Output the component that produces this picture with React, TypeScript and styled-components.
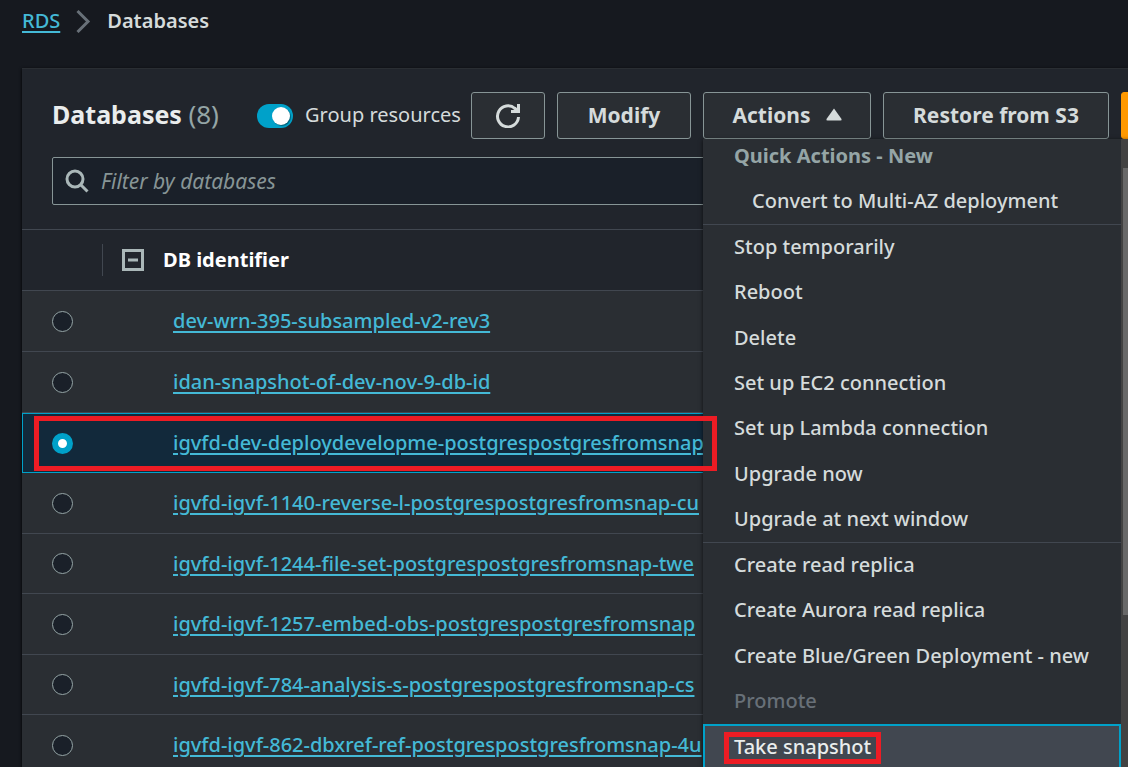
import React, { useState } from "react";
import styled, { createGlobalStyle, css } from "styled-components";

const color = {
  page: "#16191f",
  header: "#21252c",
  body: "#2a2e33",
  field: "#1a2029",
  line: "#414750",
  outline: "#879596",
  text: "#d5dbdb",
  bright: "#eaeded",
  muted: "#95a5a6",
  disabled: "#687078",
  link: "#44b9d6",
  accent: "#00a1c9",
  selected: "#12293b",
  hover: "#414750",
  primary: "#ff9900",
  marker: "#ed1c24",
};

const GlobalStyle = createGlobalStyle`
  * { box-sizing: border-box; }
  body {
    margin: 0;
    background: ${color.page};
    color: ${color.text};
    font-family: "Noto Sans", "Open Sans", sans-serif;
    font-size: 20px;
    line-height: 30px;
  }
  button, input { font: inherit; color: inherit; }
`;

const Page = styled.div`
  height: 100vh;
  overflow: hidden;
`;

const Breadcrumbs = styled.nav`
  display: flex;
  align-items: center;
  gap: 16px;
  height: 68px;
  padding: 0 22px 26px;
`;

const Link = styled.a`
  color: ${color.link};
  font-weight: 500;
  text-decoration: underline;
  text-decoration-thickness: 2px;
  text-underline-offset: 3px;
`;

const Current = styled.span`
  font-weight: 600;
`;

const Panel = styled.main`
  margin-left: 22px;
  background: ${color.header};
  border-top: 1px solid ${color.body};
  box-shadow: 0 1px 3px #000000;
`;

const Toolbar = styled.header`
  display: flex;
  align-items: center;
  padding: 23px 0 18px 30px;
`;

const Title = styled.h1`
  flex: none;
  width: 205px;
  margin: 0;
  padding-bottom: 4px;
  color: ${color.bright};
  font-size: 25px;
  line-height: 36px;
  font-weight: 700;
  white-space: nowrap;
`;

const Count = styled.span`
  color: ${color.muted};
  font-size: 26px;
  font-weight: 400;
`;

const ToggleLabel = styled.label`
  display: flex;
  flex: none;
  align-items: center;
  gap: 12px;
  width: 214px;
  white-space: nowrap;
`;

const ToggleText = styled.span`
  padding-bottom: 2px;
`;

const Toggle = styled.input`
  appearance: none;
  display: flex;
  align-items: center;
  width: 36px;
  height: 24px;
  margin: 0;
  padding: 0 3px;
  border-radius: 12px;
  background: ${color.outline};
  &::before {
    content: "";
    width: 18px;
    height: 18px;
    border-radius: 50%;
    background: #ffffff;
    box-shadow: 1px 1px 1px #00000066;
  }
  &:checked {
    justify-content: flex-end;
    background: ${color.accent};
  }
`;

const Actions = styled.div`
  display: flex;
  flex: none;
  gap: 12px;
`;

const Button = styled.button<{ $width: number; $primary?: boolean }>`
  display: flex;
  flex: none;
  align-items: center;
  justify-content: center;
  gap: 15px;
  width: ${(p) => p.$width}px;
  height: 47px;
  padding: 0 0 2px;
  border: 1px solid ${(p) => (p.$primary ? color.primary : color.outline)};
  border-radius: 3px;
  background: ${(p) => (p.$primary ? color.primary : color.body)};
  font-size: 21px;
  font-weight: 700;
  white-space: nowrap;
`;

const MenuAnchor = styled.div`
  position: relative;
`;

const Menu = styled.div`
  position: absolute;
  z-index: 2;
  top: 100%;
  left: 0;
  display: flex;
  width: 435px;
  background: ${color.body};
  box-shadow: 0 1px 4px #000000aa;
`;

const MenuScroll = styled.div`
  flex: 1;
`;

const ScrollTrack = styled.div`
  width: 17px;
  padding: 29px 2px 0;
  background: #424242;
`;

const ScrollThumb = styled.div`
  height: 447px;
  background: #686868;
`;

const MenuGroup = styled.ul`
  margin: 0;
  padding: 0;
  list-style: none;
  & + & { border-top: 1px solid ${color.line}; }
  li:nth-child(3n) { padding-top: 1px; }
`;

const MenuHeading = styled.h2`
  margin: 0;
  padding: 2px 31px 8px;
  color: ${color.muted};
  font-size: 20px;
  line-height: 30px;
  font-weight: 700;
`;

const MenuItem = styled.button<{ $indent?: boolean; $active?: boolean }>`
  display: flex;
  align-items: center;
  width: 100%;
  height: 45px;
  padding: 0 ${(p) => (p.$indent ? 49 : 31)}px 2px;
  border: 0;
  background: none;
  font-weight: 500;
  text-align: left;
  white-space: nowrap;
  &:disabled { color: ${color.disabled}; }
  ${(p) =>
    p.$active &&
    css`
      padding: 0 29px;
      border: 2px solid ${color.accent};
      background: ${color.hover};
      color: ${color.bright};
    `}
`;

const MarkedText = styled.span`
  position: relative;
  &::after {
    content: "";
    position: absolute;
    inset: 0 -10px -2px;
    border: 5px solid ${color.marker};
  }
`;

const Filter = styled.label`
  display: flex;
  align-items: center;
  gap: 12px;
  height: 48px;
  margin: 0 30px 24px;
  padding: 0 12px;
  border: 1px solid ${color.outline};
  border-radius: 2px;
  background: ${color.field};
`;

const FilterInput = styled.input`
  flex: 1;
  padding: 0;
  border: 0;
  outline: 0;
  background: none;
  font-size: 21px;
  &::placeholder {
    color: ${color.outline};
    font-style: italic;
    opacity: 1;
  }
`;

const Table = styled.table`
  width: 100%;
  table-layout: fixed;
  border-collapse: separate;
  border-spacing: 0;
  background: ${color.body};
`;

const HeadCell = styled.th<{ $width?: number }>`
  width: ${(p) => (p.$width ? `${p.$width}px` : "auto")};
  height: 62px;
  padding: 0;
  border-top: 1px solid ${color.line};
  border-bottom: 1px solid ${color.line};
  background: ${color.header};
  color: #ffffff;
  text-align: left;
`;

const HeadContent = styled.div`
  display: flex;
  align-items: center;
  gap: 19px;
  height: 32px;
  padding-left: 19px;
  border-left: 1px solid ${color.line};
`;

const CollapseButton = styled.button`
  display: flex;
  padding: 0;
  border: 0;
  background: none;
`;

const Cell = styled.td<{ $name?: boolean }>`
  height: 100%;
  padding: 0 0 0 ${(p) => (p.$name ? 71 : 30)}px;
  border-bottom: 1px solid ${color.line};
  white-space: nowrap;
`;

const Row = styled.tr<{ $selected: boolean }>`
  height: 61px;
  &:nth-child(2n + 3) { height: 60px; }
  ${(p) =>
    p.$selected &&
    css`
      background: ${color.selected};
      ${Cell} {
        border-top: 1px solid ${color.accent};
        border-bottom-color: ${color.accent};
      }
      ${Cell}:first-child {
        position: relative;
        padding-left: 29px;
        border-left: 1px solid ${color.accent};
      }
    `}
`;

const RowMarker = styled.span`
  position: absolute;
  z-index: 3;
  top: 2px;
  left: 11px;
  width: 683px;
  height: 55px;
  border: 5px solid ${color.marker};
  pointer-events: none;
`;

const Radio = styled.input`
  appearance: none;
  display: block;
  width: 21px;
  height: 21px;
  margin: 0;
  border: 1px solid ${color.muted};
  border-radius: 50%;
  background: ${color.field};
  &:checked {
    border: 6px solid ${color.accent};
    background: #ffffff;
  }
`;

const databases = [
  "dev-wrn-395-subsampled-v2-rev3",
  "idan-snapshot-of-dev-nov-9-db-id",
  "igvfd-dev-deploydevelopme-postgrespostgresfromsnap",
  "igvfd-igvf-1140-reverse-l-postgrespostgresfromsnap-cu",
  "igvfd-igvf-1244-file-set-postgrespostgresfromsnap-twe",
  "igvfd-igvf-1257-embed-obs-postgrespostgresfromsnap",
  "igvfd-igvf-784-analysis-s-postgrespostgresfromsnap-cs",
  "igvfd-igvf-862-dbxref-ref-postgrespostgresfromsnap-4u",
];

const instanceActions = [
  "Stop temporarily",
  "Reboot",
  "Delete",
  "Set up EC2 connection",
  "Set up Lambda connection",
  "Upgrade now",
  "Upgrade at next window",
];

const copyActions = [
  "Create read replica",
  "Create Aurora read replica",
  "Create Blue/Green Deployment - new",
];

function ChevronIcon() {
  return (
    <svg width="15" height="24" viewBox="0 0 15 24" fill="none" stroke="#687078" strokeWidth="3" aria-hidden="true">
      <path d="M1.500 2 12 12.500 1.500 23" />
    </svg>
  );
}

function RefreshIcon() {
  return (
    <svg width="26" height="26" viewBox="0 0 26 26" fill="none" stroke={color.text} strokeWidth="3" aria-hidden="true">
      <path d="M23.500 15A10.500 10.500 0 1 1 20 6.500" />
      <path d="M23.500 2v7.500H16M19.500 6l3.500 3" />
    </svg>
  );
}

function SearchIcon() {
  return (
    <svg width="24" height="24" viewBox="0 0 24 24" fill="none" stroke="#aab7b8" strokeWidth="3" aria-hidden="true">
      <circle cx="10" cy="10" r="8" />
      <path d="m15.500 15.500 7 7" />
    </svg>
  );
}

function CaretUpIcon() {
  return (
    <svg width="16" height="13" viewBox="0 0 16 13" fill={color.text} aria-hidden="true">
      <path d="M8 .5 15.500 11q.5 1.500-1 1.500h-13Q0 12.500.5 11Z" />
    </svg>
  );
}

function CollapseIcon() {
  return (
    <svg width="22" height="22" viewBox="0 0 22 22" fill="none" stroke="#aab7b8" strokeWidth="3" aria-hidden="true">
      <path d="M1.500 1.500h19v19h-19zM6 11h10" />
    </svg>
  );
}

export default function App() {
  const [selected, setSelected] = useState(2);
  const [grouped, setGrouped] = useState(true);

  return (
    <Page>
      <GlobalStyle />
      <Breadcrumbs aria-label="Breadcrumbs">
        <Link href="#rds">RDS</Link>
        <ChevronIcon />
        <Current>Databases</Current>
      </Breadcrumbs>
      <Panel>
        <Toolbar>
          <Title>
            Databases <Count>(8)</Count>
          </Title>
          <ToggleLabel>
            <Toggle type="checkbox" checked={grouped} onChange={() => setGrouped(!grouped)} />
            <ToggleText>Group resources</ToggleText>
          </ToggleLabel>
          <Actions>
            <Button $width={74} aria-label="Refresh">
              <RefreshIcon />
            </Button>
            <Button $width={134}>Modify</Button>
            <MenuAnchor>
              <Button $width={168} aria-expanded="true">
                Actions <CaretUpIcon />
              </Button>
              <Menu>
                <MenuScroll>
                  <MenuHeading>Quick Actions - New</MenuHeading>
                  <MenuGroup>
                    <li>
                      <MenuItem $indent>Convert to Multi-AZ deployment</MenuItem>
                    </li>
                  </MenuGroup>
                  <MenuGroup>
                    {instanceActions.map((name) => (
                      <li key={name}>
                        <MenuItem>{name}</MenuItem>
                      </li>
                    ))}
                  </MenuGroup>
                  <MenuGroup>
                    {copyActions.map((name) => (
                      <li key={name}>
                        <MenuItem>{name}</MenuItem>
                      </li>
                    ))}
                    <li>
                      <MenuItem disabled>Promote</MenuItem>
                    </li>
                    <li>
                      <MenuItem $active>
                        <MarkedText>Take snapshot</MarkedText>
                      </MenuItem>
                    </li>
                  </MenuGroup>
                </MenuScroll>
                <ScrollTrack>
                  <ScrollThumb />
                </ScrollTrack>
              </Menu>
            </MenuAnchor>
            <Button $width={226}>Restore from S3</Button>
            <Button $width={190} $primary aria-label="Create database" />
          </Actions>
        </Toolbar>
        <Filter>
          <SearchIcon />
          <FilterInput type="text" placeholder="Filter by databases" aria-label="Filter by databases" />
        </Filter>
        <Table>
          <thead>
            <tr>
              <HeadCell $width={80} aria-label="Selection" />
              <HeadCell>
                <HeadContent>
                  <CollapseButton aria-label="Collapse all">
                    <CollapseIcon />
                  </CollapseButton>
                  DB identifier
                </HeadContent>
              </HeadCell>
            </tr>
          </thead>
          <tbody>
            {databases.map((name, i) => (
              <Row key={name} $selected={i === selected}>
                <Cell>
                  <Radio
                    type="radio"
                    name="database"
                    aria-label={name}
                    checked={i === selected}
                    onChange={() => setSelected(i)}
                  />
                  {i === 2 && <RowMarker />}
                </Cell>
                <Cell $name>
                  <Link href={`#${name}`}>{name}</Link>
                </Cell>
              </Row>
            ))}
          </tbody>
        </Table>
      </Panel>
    </Page>
  );
}
